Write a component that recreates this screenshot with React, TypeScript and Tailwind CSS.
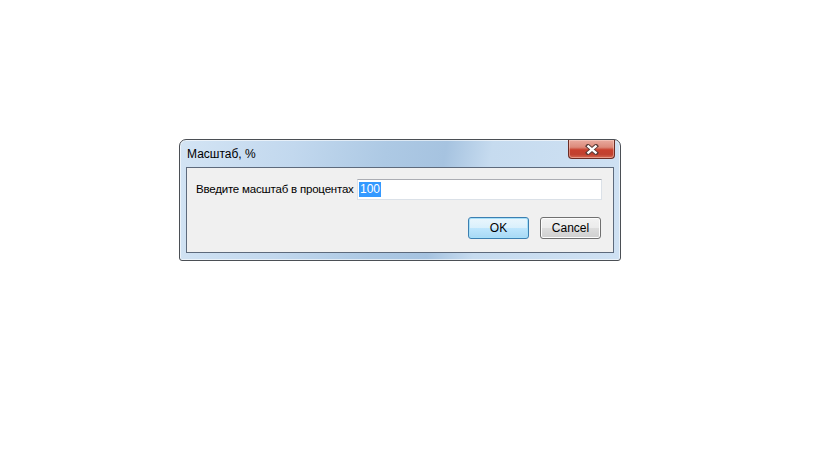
import React from "react";

// Диалог "Масштаб, %" в стиле Windows 7 (Aero)
export default function App() {
  return (
    <div className="w-[816px] h-[460px] bg-white pl-[179px] pt-[139px] font-['Liberation_Sans',Arial,sans-serif]">
      <div className="flex w-[442px] h-[122px] flex-col rounded-t-[7px] rounded-b-[3px] border border-[#4b4f55] bg-[linear-gradient(100deg,#d3e4f4_0%,#c2d8ee_25%,#adc9e4_45%,#a6c3e0_58%,#c6dbef_68%,#cfe1f3_100%)] shadow-[inset_0_0_0_1px_rgba(255,255,255,0.6)]">
        {/* заголовок */}
        <div className="flex h-[27px] items-start justify-between">
          <div className="flex h-[27px] items-center pl-[7px] text-[12px] text-black">
            Масштаб, %
          </div>
          <CloseButton />
        </div>

        {/* клиентская область */}
        <div className="mx-[6px] flex h-[86px] flex-col border border-[#5d6a7c] bg-[#f0f0f0] px-[9px] pt-[11px]">
          <div className="flex items-center">
            <span className="w-[155px] shrink-0 whitespace-nowrap text-[11.5px] tracking-[-0.2px] text-black">
              Введите масштаб в процентах
            </span>
            <div className="ml-[6px] flex h-[21px] w-[245px] shrink-0 items-center border border-[#dbe1e8] border-t-[#abadb3] bg-white pl-[1px]">
              <span className="bg-[#3399ff] px-[1px] text-[12px] leading-[15px] text-white">100</span>
            </div>
          </div>
          <div className="mt-[17px] flex justify-end gap-[11px] pr-[3px]">
            <WinButton primary>OK</WinButton>
            <WinButton>Cancel</WinButton>
          </div>
        </div>
      </div>
    </div>
  );
}

function CloseButton() {
  return (
    <div className="mr-[5px] flex h-[19px] w-[47px] items-center justify-center rounded-b-[4px] border border-t-0 border-[#6a2c25] bg-[linear-gradient(180deg,#e9ab9f_0%,#dc8a7b_40%,#c8402d_55%,#c0412f_80%,#d66a52_100%)] shadow-[inset_0_0_0_1px_rgba(255,220,210,0.45)]">
      <svg width="14" height="11" viewBox="0 0 14 11">
        <path d="M3 2 L11 9 M11 2 L3 9" stroke="#5a3a36" strokeWidth="4.2" strokeLinecap="square" />
        <path d="M3.3 2.3 L10.7 8.7 M10.7 2.3 L3.3 8.7" stroke="#ffffff" strokeWidth="2.2" strokeLinecap="square" />
      </svg>
    </div>
  );
}

function WinButton({ children, primary }: { children: React.ReactNode; primary?: boolean }) {
  return (
    <div
      className={`flex h-[22px] w-[61px] items-center justify-center rounded-[3px] border text-[12px] text-black ${
        primary
          ? "border-[#3c7fb1] bg-[linear-gradient(180deg,#eaf6fd_0%,#d9f0fc_50%,#bee6fd_51%,#a7d9f5_100%)] shadow-[inset_0_0_0_1px_#a6e0f9]"
          : "border-[#707070] bg-[linear-gradient(180deg,#f2f2f2_0%,#ebebeb_50%,#dddddd_51%,#cfcfcf_100%)] shadow-[inset_0_0_0_1px_#fcfcfc]"
      }`}
    >
      {children}
    </div>
  );
}
